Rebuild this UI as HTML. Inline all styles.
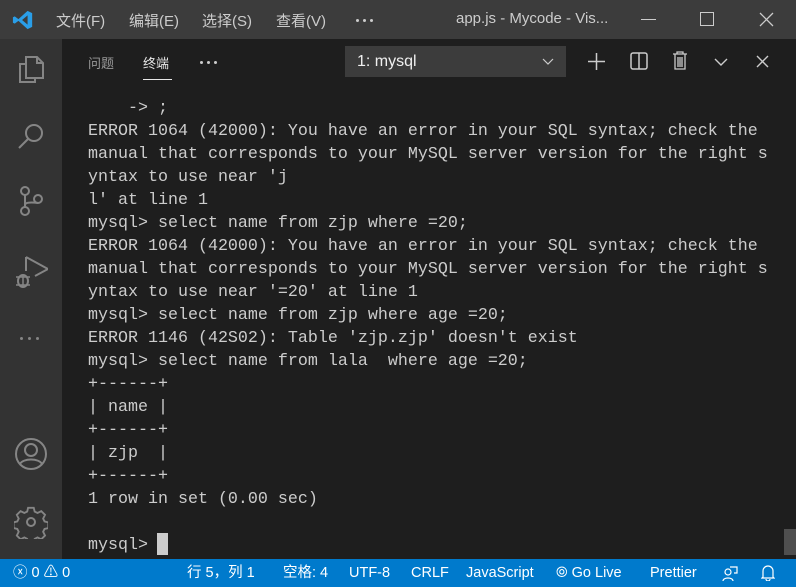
<!DOCTYPE html>
<html><head><meta charset="utf-8"><style>
*{margin:0;padding:0;box-sizing:border-box}
body{width:796px;height:587px;overflow:hidden;background:#1e1e1e;font-family:"Liberation Sans","Noto Sans CJK SC",sans-serif;position:relative}
.title{position:absolute;left:0;top:0;width:796px;height:39px;background:#3c3c3c;color:#cccccc;font-size:15px}
.title span{position:absolute;top:10px}
.act{position:absolute;left:0;top:39px;width:62px;height:520px;background:#333333}
.act svg{position:absolute}
.panelhdr{position:absolute;left:62px;top:39px;right:0;height:46px}
.term{position:absolute;left:88px;top:97px;font-family:"Liberation Mono",monospace;font-size:16.67px;line-height:23px;color:#cccccc;white-space:pre}
.status{position:absolute;left:0;top:559px;width:796px;height:28px;background:#007acc;color:#fff;font-size:14.5px}
.status span{position:absolute;top:0;line-height:28px}
.dots{position:absolute;display:flex;gap:4px}
.dots i{width:3px;height:3px;border-radius:50%;background:#ccc;display:block}
</style></head><body>
<div class="title">
<svg style="position:absolute;left:12px;top:9px" width="22" height="22" viewBox="0 0 24 24"><path d="M17 2 L22 4.5 V19.5 L17 22 L7 13 L3 16 L1 15 V9 L3 8 L7 11 L17 2 Z M17 7 L11 12 L17 17 Z" fill="#2a9ee8"/></svg>
<span style="left:56px">文件(F)</span>
<span style="left:129px">编辑(E)</span>
<span style="left:202px">选择(S)</span>
<span style="left:276px">查看(V)</span>
<div class="dots" style="left:356px;top:19px"><i></i><i></i><i></i></div>
<span style="left:456px">app.js - Mycode - Vis...</span>
<div style="position:absolute;left:641px;top:19px;width:15px;height:1px;background:#ccc"></div>
<div style="position:absolute;left:700px;top:12px;width:14px;height:14px;border:1px solid #ccc"></div>
<svg style="position:absolute;left:759px;top:12px" width="15" height="15"><path d="M1 1L14 14M14 1L1 14" stroke="#ccc" stroke-width="1.3"/></svg>
</div>
<div class="act">
<svg style="left:16px;top:14px" width="30" height="32" viewBox="0 0 30 32"><path d="M10 4h11l6 6v15H10z M21 4v6h6" fill="none" stroke="#858585" stroke-width="2"/><path d="M10 11H4v18h15v-4" fill="none" stroke="#858585" stroke-width="2"/></svg>
<svg style="left:16px;top:82px" width="30" height="30"><circle cx="18" cy="12" r="8" fill="none" stroke="#858585" stroke-width="2"/><path d="M12 18L3 27" stroke="#858585" stroke-width="2"/></svg>
<svg style="left:16px;top:146px" width="30" height="34"><circle cx="9" cy="6" r="4" fill="none" stroke="#858585" stroke-width="2"/><circle cx="9" cy="26" r="4" fill="none" stroke="#858585" stroke-width="2"/><circle cx="22" cy="14" r="4" fill="none" stroke="#858585" stroke-width="2"/><path d="M9 10v12M9 20c0-4 13-2 13-2" fill="none" stroke="#858585" stroke-width="2"/></svg>
<svg style="left:14px;top:216px" width="34" height="34"><path d="M12 2v14M12 2l22 12-13 7" fill="none" stroke="#858585" stroke-width="2"/><ellipse cx="9" cy="26" rx="5" ry="6" fill="none" stroke="#858585" stroke-width="2"/><path d="M2 22h14M2 30h14M9 20v12" stroke="#858585" stroke-width="1.5"/></svg>
<div class="dots" style="left:20px;top:298px;gap:5px"><i style="background:#858585"></i><i style="background:#858585"></i><i style="background:#858585"></i></div>
<svg style="left:14px;top:398px" width="34" height="34"><circle cx="17" cy="17" r="15" fill="none" stroke="#858585" stroke-width="2"/><circle cx="17" cy="13" r="6" fill="none" stroke="#858585" stroke-width="2"/><path d="M6 27c3-6 19-6 22 0" fill="none" stroke="#858585" stroke-width="2"/></svg>
<svg style="left:14px;top:466px" width="34" height="34" viewBox="0 0 34 34"><circle cx="17" cy="17" r="4" fill="none" stroke="#858585" stroke-width="2"/><path d="M14 2h6l1 4 3 1.5 4-2 4 4-2 4 1.5 3 4 1v6l-4 1-1.5 3 2 4-4 4-4-2-3 1.5-1 4h-6l-1-4-3-1.5-4 2-4-4 2-4-1.5-3-4-1v-6l4-1 1.5-3-2-4 4-4 4 2 3-1.5z" fill="none" stroke="#858585" stroke-width="2" transform="scale(0.94) translate(1 1)"/></svg>
</div>
<div class="panelhdr">
<span style="position:absolute;left:26px;top:14px;color:#999;font-size:13px">问题</span>
<span style="position:absolute;left:81px;top:14px;color:#e7e7e7;font-size:13px">终端</span>
<div style="position:absolute;left:81px;top:40px;width:29px;height:1px;background:#e7e7e7"></div>
<div class="dots" style="left:138px;top:22px"><i></i><i></i><i></i></div>
<div style="position:absolute;left:283px;top:7px;width:221px;height:31px;background:#3c3c3c;color:#f0f0f0;font-size:16px;padding:7px 12px">1: mysql</div>
<svg style="position:absolute;left:480px;top:19px" width="12" height="8"><path d="M1 1l5 5 5-5" fill="none" stroke="#ccc" stroke-width="1.2"/></svg>
<svg style="position:absolute;left:525px;top:13px" width="19" height="19"><path d="M9.5 1v17M1 9.5h17" stroke="#ccc" stroke-width="1.5"/></svg>
<svg style="position:absolute;left:568px;top:13px" width="18" height="18"><rect x="1" y="1" width="16" height="16" rx="2" fill="none" stroke="#ccc" stroke-width="1.5"/><path d="M9 1v16" stroke="#ccc" stroke-width="1.5"/></svg>
<svg style="position:absolute;left:610px;top:12px" width="16" height="19"><path d="M1 3h14M5 3V1h6v2M3 3v15h10V3M6 6v10M8 6v10M10 6v10" fill="none" stroke="#ccc" stroke-width="1.3"/></svg>
<svg style="position:absolute;left:652px;top:19px" width="14" height="8"><path d="M1 1l6 6 6-6" fill="none" stroke="#ccc" stroke-width="1.4"/></svg>
<svg style="position:absolute;left:694px;top:16px" width="13" height="13"><path d="M1 1l11 11M12 1L1 12" stroke="#ccc" stroke-width="1.4"/></svg>
</div>
<div class="term">    -> ;
ERROR 1064 (42000): You have an error in your SQL syntax; check the
manual that corresponds to your MySQL server version for the right s
yntax to use near 'j
l' at line 1
mysql> select name from zjp where =20;
ERROR 1064 (42000): You have an error in your SQL syntax; check the
manual that corresponds to your MySQL server version for the right s
yntax to use near '=20' at line 1
mysql> select name from zjp where age =20;
ERROR 1146 (42S02): Table 'zjp.zjp' doesn't exist
mysql> select name from lala  where age =20;
+------+
| name |
+------+
| zjp  |
+------+
1 row in set (0.00 sec)

mysql> </div>
<div style="position:absolute;left:157px;top:533px;width:11px;height:22px;background:#cccccc"></div>
<div style="position:absolute;left:784px;top:529px;width:12px;height:26px;background:#4f4f4f"></div>
<div class="status">
<span style="left:13px">ⓧ 0 ⚠ 0</span>
<span style="left:187px">行 5，列 1</span>
<span style="left:283px">空格: 4</span>
<span style="left:349px">UTF-8</span>
<span style="left:411px">CRLF</span>
<span style="left:466px">JavaScript</span>
<span style="left:556px">⦾ Go Live</span>
<span style="left:650px">Prettier</span>
<svg style="position:absolute;left:722px;top:6px" width="16" height="16"><circle cx="6" cy="7" r="3" fill="none" stroke="#fff" stroke-width="1.2"/><path d="M1 16c0-4 10-4 10 0M8 2h7v6h-3" fill="none" stroke="#fff" stroke-width="1.2"/></svg>
<svg style="position:absolute;left:761px;top:5px" width="14" height="17"><path d="M2 13V7a5 5 0 0 1 10 0v6l1 1H1z M5 15a2 2 0 0 0 4 0" fill="none" stroke="#fff" stroke-width="1.2"/></svg>
</div>
</body></html>
